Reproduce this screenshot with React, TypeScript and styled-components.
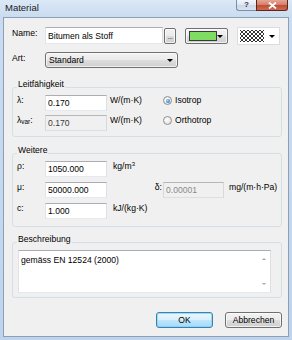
import React from "react";
import styled, { createGlobalStyle } from "styled-components";

const GlobalStyle = createGlobalStyle`
  html, body { margin: 0; padding: 0; background: #c4d8ef; }
  body {
    font-family: "Liberation Sans", Arial, sans-serif;
    font-size: 8.6px;
    color: #000;
  }
  * { box-sizing: border-box; }
`;

const Window = styled.div`
  width: 292px;
  height: 340px;
  display: flex;
  flex-direction: column;
  padding: 0 3px 3px 3px;
  background: linear-gradient(180deg, #dbe8f6 0px, #cadcf1 17px, #bfd4ec 100%);
`;

const TitleBar = styled.div`
  height: 17px;
  flex: none;
  display: flex;
  align-items: flex-start;
`;

const Title = styled.div`
  padding-left: 2px;
  line-height: 16px;
  font-size: 9.5px;
  color: #1a1a1a;
`;

const CaptionGroup = styled.div`
  margin-left: auto;
  margin-right: 1px;
  display: flex;
  height: 11px;
`;

const CaptionButton = styled.div<{ $variant: "help" | "close" }>`
  height: 11px;
  width: ${(p) => (p.$variant === "help" ? 20 : 32)}px;
  display: flex;
  align-items: center;
  justify-content: center;
  border: 1px solid ${(p) => (p.$variant === "help" ? "#7b8ea8" : "#5e2619")};
  border-top: none;
  ${(p) =>
    p.$variant === "help"
      ? "border-right: none; border-radius: 0 0 0 3px;"
      : "border-radius: 0 0 3px 0;"}
  background: ${(p) =>
    p.$variant === "help"
      ? "linear-gradient(#f3f6fa, #dfe7f1 50%, #cbd7e6 51%, #d9e3ef)"
      : "linear-gradient(#e6a696, #d47d69 50%, #c14b34 51%, #cd6a50)"};
  color: ${(p) => (p.$variant === "help" ? "#2a3a50" : "#fff")};
  font-weight: bold;
  font-size: 8px;
  line-height: 1;
`;

const Client = styled.div`
  flex: 1;
  background: #f0f0f0;
  border: 1px solid #8b9fb8;
  padding: 9px 6px 0 8px;
  display: flex;
  flex-direction: column;
`;

const TopRow = styled.div<{ $mt?: number; $h: number }>`
  display: flex;
  align-items: flex-start;
  height: ${(p) => p.$h}px;
  margin-top: ${(p) => p.$mt ?? 0}px;
`;

const RowLabel = styled.div`
  width: 33px;
  flex: none;
  line-height: 12px;
`;

const Edit = styled.input<{ $w: number; $h?: number; $tone?: "normal" | "readonly" | "disabled" }>`
  width: ${(p) => p.$w}px;
  height: ${(p) => p.$h ?? 16}px;
  flex: none;
  margin: 0;
  padding: 0 2px;
  font: inherit;
  outline: none;
  border: 1px solid;
  border-color: ${(p) =>
    p.$tone && p.$tone !== "normal"
      ? "#b4b8bc #d6d9dc #dcdfe2 #d6d9dc"
      : "#abadb3 #dbdfe6 #e3e9ef #e2e3ea"};
  background: ${(p) => (p.$tone && p.$tone !== "normal" ? "#f0f0f0" : "#fff")};
  color: ${(p) => (p.$tone === "disabled" ? "#8a8a8a" : p.$tone === "readonly" ? "#3a3a3a" : "#000")};
`;

const PushButton = styled.div<{ $w: number; $h: number; $mt?: number; $ml?: number }>`
  width: ${(p) => p.$w}px;
  height: ${(p) => p.$h}px;
  margin-top: ${(p) => p.$mt ?? 0}px;
  margin-left: ${(p) => p.$ml ?? 0}px;
  flex: none;
  border: 1px solid #707070;
  border-radius: 2px;
  background: linear-gradient(#f2f2f2 0%, #ebebeb 48%, #dddddd 52%, #cfcfcf 100%);
  box-shadow: inset 0 0 0 1px rgba(255, 255, 255, 0.7);
  display: flex;
  align-items: center;
`;

const Ellipsis = styled(PushButton)`
  justify-content: center;
  align-items: flex-end;
  padding-bottom: 3px;
  font-size: 8px;
  line-height: 6px;
  color: #333;
  letter-spacing: -0.5px;
`;

const ColorButton = styled(PushButton)`
  padding: 0 4px 0 3px;
  justify-content: space-between;
`;

const Swatch = styled.div<{ $color: string }>`
  width: 28px;
  height: 10px;
  background: ${(p) => p.$color};
  border: 1px solid #3a3a3a;
`;

const Arrow = styled.span<{ $color?: string }>`
  width: 0;
  height: 0;
  border-left: 3px solid transparent;
  border-right: 3px solid transparent;
  border-top: 3px solid ${(p) => p.$color ?? "#000"};
  flex: none;
`;

const HatchButton = styled.div`
  width: 43px;
  height: 18px;
  margin-left: 9px;
  flex: none;
  background: #fff;
  border: 1px solid #d9dce0;
  display: flex;
  align-items: center;
  justify-content: space-between;
  padding: 0 4px 0 2px;
`;

const Combo = styled(PushButton)`
  justify-content: space-between;
  padding: 0 4px 0 3px;
  border-radius: 3px;
`;

const Group = styled.fieldset<{ $mt: number; $pb: number }>`
  margin: ${(p) => p.$mt}px 0 0 0;
  padding: 0 4px ${(p) => p.$pb}px 4px;
  min-width: 0;
  border: 1px solid #d5dfe5;
  border-radius: 3px;
  flex: none;
`;

const Legend = styled.legend`
  padding: 0 1px 6px 1px;
  margin: 0;
  line-height: 10px;
`;

const FieldRow = styled.div<{ $mt?: number }>`
  display: flex;
  align-items: flex-start;
  height: 16px;
  margin-top: ${(p) => p.$mt ?? 0}px;
`;

const FieldLabel = styled.div<{ $w: number; $align?: "left" | "right"; $pl?: number }>`
  width: ${(p) => p.$w}px;
  flex: none;
  line-height: 11px;
  white-space: nowrap;
  text-align: ${(p) => p.$align ?? "left"};
  padding-left: ${(p) => p.$pl ?? 0}px;
  padding-right: ${(p) => (p.$align === "right" ? 1 : 0)}px;
`;

const Sub = styled.span`
  font-size: 6.4px;
  vertical-align: -1px;
`;

const Sup = styled.sup`
  font-size: 6px;
  vertical-align: 3px;
  line-height: 0;
`;

const Radio = styled.label`
  display: flex;
  align-items: center;
  gap: 3px;
  height: 11px;
  line-height: 11px;
`;

const RadioCircle = styled.span<{ $checked?: boolean }>`
  width: 9px;
  height: 9px;
  border-radius: 50%;
  border: 1px solid #8e8f8f;
  background: radial-gradient(circle at 40% 35%, #ffffff, #d9d9d9);
  display: flex;
  align-items: center;
  justify-content: center;
  &::after {
    content: "";
    width: 4px;
    height: 4px;
    border-radius: 50%;
    background: radial-gradient(circle at 40% 35%, #9ad9ff, #165ea8);
    display: ${(p) => (p.$checked ? "block" : "none")};
  }
`;

const Memo = styled.div`
  width: 253px;
  height: 43px;
  margin-left: 1px;
  background: #fff;
  border: 1px solid;
  border-color: #abadb3 #dbdfe6 #e3e9ef #e2e3ea;
  display: flex;
`;

const MemoText = styled.div`
  flex: 1;
  padding: 4px 0 0 2px;
  line-height: 11px;
`;

const ScrollBar = styled.div`
  width: 12px;
  display: flex;
  flex-direction: column;
  align-items: center;
  justify-content: space-between;
  padding: 7px 0 7px 0;
`;

const ScrollArrow = styled.span<{ $up?: boolean }>`
  width: 0;
  height: 0;
  border-left: 2.5px solid transparent;
  border-right: 2.5px solid transparent;
  ${(p) => (p.$up ? "border-bottom" : "border-top")}: 2.5px solid #a8a8a8;
`;

const ButtonRow = styled.div`
  display: flex;
  justify-content: flex-end;
  gap: 12px;
  margin-top: 14px;
`;

const DialogButton = styled.div<{ $default?: boolean }>`
  width: 57px;
  height: 16px;
  display: flex;
  align-items: center;
  justify-content: center;
  border-radius: 3px;
  border: 1px solid ${(p) => (p.$default ? "#3c7fb1" : "#707070")};
  background: ${(p) =>
    p.$default
      ? "linear-gradient(#eaf6fd 0%, #d9f0fc 48%, #bee6fd 52%, #a7d9f5 100%)"
      : "linear-gradient(#f2f2f2 0%, #ebebeb 48%, #dddddd 52%, #cfcfcf 100%)"};
  box-shadow: inset 0 0 0 1px ${(p) => (p.$default ? "rgba(120,210,250,0.7)" : "rgba(255,255,255,0.7)")};
`;

const HatchPattern = () => (
  <svg width="24" height="12" viewBox="0 0 24 12">
    <defs>
      <pattern id="xh" width="4" height="4" patternUnits="userSpaceOnUse">
        <path d="M0 0 L4 4 M4 0 L0 4" stroke="#000" strokeWidth="0.8" />
      </pattern>
    </defs>
    <rect x="0" y="0" width="24" height="12" fill="url(#xh)" />
  </svg>
);

const CloseGlyph = () => (
  <svg width="9" height="7" viewBox="0 0 9 7">
    <path d="M1 0.5 L8 6.5 M8 0.5 L1 6.5" stroke="#fff" strokeWidth="1.8" />
  </svg>
);

export default function App() {
  return (
    <>
      <GlobalStyle />
      <Window>
        <TitleBar>
          <Title>Material</Title>
          <CaptionGroup>
            <CaptionButton $variant="help">?</CaptionButton>
            <CaptionButton $variant="close">
              <CloseGlyph />
            </CaptionButton>
          </CaptionGroup>
        </TitleBar>
        <Client>
          <TopRow $h={18}>
            <RowLabel>Name:</RowLabel>
            <Edit $w={118} $h={17} defaultValue="Bitumen als Stoff" />
            <Ellipsis $w={12} $h={16} $mt={1} $ml={1}>...</Ellipsis>
            <ColorButton $w={43} $h={16} $mt={1} $ml={9}>
              <Swatch $color="#7fdc62" />
              <Arrow />
            </ColorButton>
            <HatchButton>
              <HatchPattern />
              <Arrow />
            </HatchButton>
          </TopRow>
          <TopRow $h={16} $mt={7}>
            <RowLabel>Art:</RowLabel>
            <Combo $w={133} $h={16}>
              <span>Standard</span>
              <Arrow />
            </Combo>
          </TopRow>

          <Group $mt={11} $pb={5}>
            <Legend>Leitfähigkeit</Legend>
            <FieldRow>
              <FieldLabel $w={28}>λ:</FieldLabel>
              <Edit $w={62} defaultValue="0.170" />
              <FieldLabel $w={56} $pl={3}>W/(m·K)</FieldLabel>
              <Radio>
                <RadioCircle $checked />
                Isotrop
              </Radio>
            </FieldRow>
            <FieldRow $mt={4}>
              <FieldLabel $w={28}>
                λ<Sub>var</Sub>:
              </FieldLabel>
              <Edit $w={62} $tone="readonly" readOnly defaultValue="0.170" />
              <FieldLabel $w={56} $pl={3}>W/(m·K)</FieldLabel>
              <Radio>
                <RadioCircle />
                Orthotrop
              </Radio>
            </FieldRow>
          </Group>

          <Group $mt={8} $pb={7}>
            <Legend>Weitere</Legend>
            <FieldRow>
              <FieldLabel $w={28}>ρ:</FieldLabel>
              <Edit $w={62} defaultValue="1050.000" />
              <FieldLabel $w={56} $pl={6}>
                kg/m<Sup>3</Sup>
              </FieldLabel>
            </FieldRow>
            <FieldRow $mt={5}>
              <FieldLabel $w={28}>μ:</FieldLabel>
              <Edit $w={62} defaultValue="50000.000" />
              <FieldLabel $w={56} $align="right">δ:</FieldLabel>
              <Edit $w={61} $tone="disabled" disabled defaultValue="0.00001" />
              <FieldLabel $w={60} $pl={5}>mg/(m·h·Pa)</FieldLabel>
            </FieldRow>
            <FieldRow $mt={5}>
              <FieldLabel $w={28}>c:</FieldLabel>
              <Edit $w={62} defaultValue="1.000" />
              <FieldLabel $w={56} $pl={6}>kJ/(kg·K)</FieldLabel>
            </FieldRow>
          </Group>

          <Group $mt={7} $pb={4}>
            <Legend>Beschreibung</Legend>
            <Memo>
              <MemoText>gemäss EN 12524 (2000)</MemoText>
              <ScrollBar>
                <ScrollArrow $up />
                <ScrollArrow />
              </ScrollBar>
            </Memo>
          </Group>

          <ButtonRow>
            <DialogButton $default>OK</DialogButton>
            <DialogButton>Abbrechen</DialogButton>
          </ButtonRow>
        </Client>
      </Window>
    </>
  );
}
